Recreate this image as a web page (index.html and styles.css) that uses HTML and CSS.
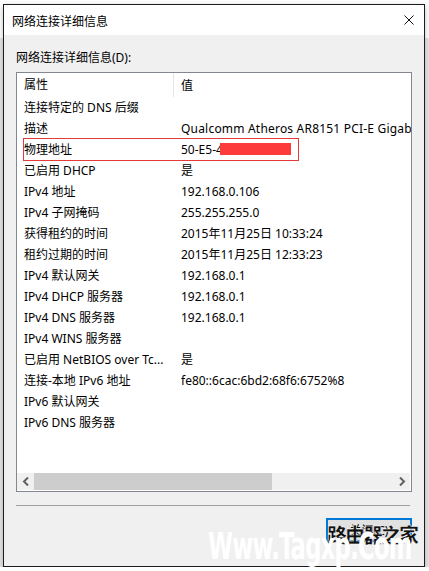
FILE: index.html
```html
<!DOCTYPE html>
<html lang="zh-CN">
<head>
    <meta charset="UTF-8">
    <meta name="viewport" content="width=device-width, initial-scale=1.0">
    <title>网络连接详细信息</title>
    <link rel="stylesheet" href="styles.css">
</head>
<body>

    <div class="window">
        <div class="titlebar">
            <span class="title">网络连接详细信息</span>
            <svg class="close" width="10" height="10" viewBox="0 0 10 10">
                <path d="M0.5 0.5 L9.5 9.5 M9.5 0.5 L0.5 9.5" stroke="#111" stroke-width="1" fill="none"/>
            </svg>
        </div>

        <div class="content">
            <div class="caption">网络连接详细信息(D):</div>

            <div class="listbox">
                <div class="list-head">
                    <div class="col-name">属性</div>
                    <div class="col-value">值</div>
                </div>
                <div class="list-body">
                    <div class="row"><span class="col-name">连接特定的 DNS 后缀</span><span class="col-value"></span></div>
                    <div class="row"><span class="col-name">描述</span><span class="col-value wide">Qualcomm Atheros AR8151 PCI-E Gigabit Ethernet Controller (NDIS 6.30)</span></div>
                    <div class="row marked"><span class="col-name">物理地址</span><span class="col-value">50-E5-4</span><span class="redact"></span></div>
                    <div class="row"><span class="col-name">已启用 DHCP</span><span class="col-value">是</span></div>
                    <div class="row"><span class="col-name">IPv4 地址</span><span class="col-value">192.168.0.106</span></div>
                    <div class="row"><span class="col-name">IPv4 子网掩码</span><span class="col-value">255.255.255.0</span></div>
                    <div class="row"><span class="col-name">获得租约的时间</span><span class="col-value">2015年11月25日 10:33:24</span></div>
                    <div class="row"><span class="col-name">租约过期的时间</span><span class="col-value">2015年11月25日 12:33:23</span></div>
                    <div class="row"><span class="col-name">IPv4 默认网关</span><span class="col-value">192.168.0.1</span></div>
                    <div class="row"><span class="col-name">IPv4 DHCP 服务器</span><span class="col-value">192.168.0.1</span></div>
                    <div class="row"><span class="col-name">IPv4 DNS 服务器</span><span class="col-value">192.168.0.1</span></div>
                    <div class="row"><span class="col-name">IPv4 WINS 服务器</span><span class="col-value"></span></div>
                    <div class="row"><span class="col-name">已启用 NetBIOS over Tc...</span><span class="col-value">是</span></div>
                    <div class="row"><span class="col-name">连接-本地 IPv6 地址</span><span class="col-value">fe80::6cac:6bd2:68f6:6752%8</span></div>
                    <div class="row"><span class="col-name">IPv6 默认网关</span><span class="col-value"></span></div>
                    <div class="row"><span class="col-name">IPv6 DNS 服务器</span><span class="col-value"></span></div>
                </div>
                <div class="hscroll">
                    <div class="arrow">
                        <svg width="8" height="9" viewBox="0 0 8 9"><path d="M6 0.5 L2 4.5 L6 8.5" stroke="#606060" stroke-width="2" fill="none"/></svg>
                    </div>
                    <div class="track"><div class="thumb"></div></div>
                    <div class="arrow">
                        <svg width="8" height="9" viewBox="0 0 8 9"><path d="M2 0.5 L6 4.5 L2 8.5" stroke="#606060" stroke-width="2" fill="none"/></svg>
                    </div>
                </div>
            </div>

            <div class="divider"></div>

            <div class="buttons">
                <button class="btn-close">关闭(C)</button>
            </div>
        </div>

        <!-- 水印 -->
        <div class="watermark">
            <span class="wm-cn">路由器之家</span>
            <span class="wm-en">Www.Tagxp.Com</span>
        </div>
    </div>

</body>
</html>
```

FILE: styles.css
```css
body {
    margin: 0;
    background: linear-gradient(#ffffff 0, #ffffff 38px, #e6e6e6 38px);
    font-family: "Noto Sans", "Noto Sans CJK SC", sans-serif;
    font-size: 12px;
    color: #000;
}
.window {
    position: relative;
    box-sizing: border-box;
    width: 422px;
    height: 563px;
    margin: 4px 0 0 3px;
    border: 1px solid #1c1c1c;
    background: #f0f0f0;
    box-shadow: 0 2px 6px rgba(0, 0, 0, 0.25);
    display: flex;
    flex-direction: column;
}
.titlebar {
    height: 30px;
    background: #fff;
    display: flex;
    align-items: center;
    justify-content: space-between;
    padding: 0 10px 0 8px;
}
.title {
    font-family: "Noto Sans CJK SC", sans-serif;
    font-size: 12px;
}
.close {
    margin-top: -1px;
}
.content {
    flex: 1;
    padding: 15px 12px 0 12px;
    display: flex;
    flex-direction: column;
}
.caption {
    line-height: 16px;
    height: 16px;
    margin-bottom: 6px;
}
.listbox {
    box-sizing: border-box;
    height: 420px;
    border: 1px solid #828790;
    background: #fff;
    display: flex;
    flex-direction: column;
}
.list-head {
    height: 24px;
    display: flex;
    align-items: center;
}
.list-head .col-name {
    border-right: 1px solid #e5e5e5;
    height: 24px;
    line-height: 24px;
}
.col-name {
    box-sizing: border-box;
    width: 157px;
    flex: none;
    padding-left: 7px;
    white-space: nowrap;
}
.col-value {
    padding-left: 7px;
    white-space: nowrap;
}
.col-value.wide {
    letter-spacing: 0.2px;
}
.list-body {
    flex: 1;
    overflow: hidden;
}
.row {
    position: relative;
    height: 21px;
    line-height: 21px;
    display: flex;
}
.row.marked::before {
    content: "";
    position: absolute;
    left: 6px;
    top: -1px;
    width: 274px;
    height: 21px;
    border: 1px solid #e33a3a;
}
.redact {
    position: absolute;
    left: 203px;
    top: 4px;
    width: 71px;
    height: 12px;
    background: #fd3b3b;
}
.hscroll {
    height: 17px;
    display: flex;
    background: #f0f0f0;
    margin-right: 1px;
    margin-bottom: 1px;
}
.arrow {
    width: 17px;
    display: flex;
    align-items: center;
    justify-content: center;
}
.track {
    flex: 1;
}
.thumb {
    width: 238px;
    height: 100%;
    background: #cdcdcd;
}
.divider {
    height: 1px;
    background: #a0a0a0;
    margin: 13px 2px 0 0;
}
.buttons {
    display: flex;
    justify-content: flex-end;
    margin-top: 12px;
}
.btn-close {
    box-sizing: border-box;
    width: 86px;
    height: 24px;
    border: 2px solid #0078d7;
    background: #e1e1e1;
    font-family: "Noto Sans", "Noto Sans CJK SC", sans-serif;
    font-size: 12px;
    padding: 0;
}
.watermark {
    position: absolute;
    right: 6px;
    bottom: 1px;
    width: 210px;
    height: 40px;
}
.wm-cn {
    position: absolute;
    right: 1px;
    top: -5px;
    font-family: "Noto Sans CJK SC", sans-serif;
    font-weight: 900;
    font-size: 20px;
    letter-spacing: -2px;
    color: #111;
    -webkit-text-stroke: 0.5px #fff;
}
.wm-en {
    position: absolute;
    left: 0;
    bottom: -3px;
    font-family: "Liberation Sans Narrow", "DejaVu Sans Condensed", sans-serif;
    font-weight: bold;
    font-size: 37px;
    letter-spacing: -1px;
    color: #fff;
    transform: scaleX(0.68);
    transform-origin: left bottom;
    white-space: nowrap;
}
```
